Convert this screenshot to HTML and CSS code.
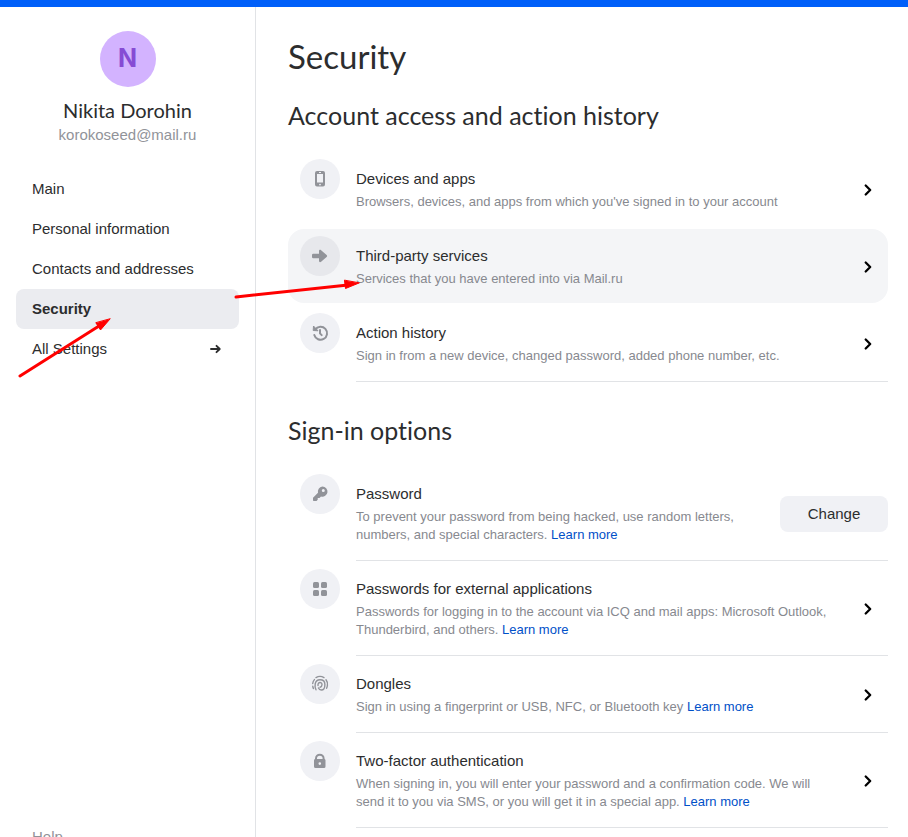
FILE: index.html
```html
<!DOCTYPE html>
<html lang="en">
<head>
    <meta charset="UTF-8">
    <meta name="viewport" content="width=device-width, initial-scale=1.0">
    <title>Security</title>
    <link rel="stylesheet" href="styles.css">
</head>
<body>

    <!-- Shared chevron shape -->
    <svg class="sprite" aria-hidden="true">
        <symbol id="chevron" viewBox="0 0 16 16">
            <path d="M5.700 3.500 10.200 8l-4.500 4.500" fill="none" stroke="currentColor" stroke-width="2.300" stroke-linecap="round" stroke-linejoin="round"/>
        </symbol>
    </svg>

    <div class="layout">
        <aside class="sidebar">
            <div class="profile">
                <div class="avatar">N</div>
                <div class="profile-name">Nikita Dorohin</div>
                <div class="profile-email">korokoseed@mail.ru</div>
            </div>
            <nav class="menu">
                <a href="#">Main</a>
                <a href="#">Personal information</a>
                <a href="#">Contacts and addresses</a>
                <a href="#" class="active">Security</a>
                <a href="#">All Settings
                    <svg width="16" height="16" viewBox="0 0 16 16" aria-hidden="true">
                        <path d="M4 9h8.500M9.500 5.800 12.700 9l-3.200 3.200" fill="none" stroke="currentColor" stroke-width="1.900" stroke-linecap="round" stroke-linejoin="round"/>
                    </svg>
                </a>
            </nav>
            <a href="#" class="help">Help</a>
        </aside>

        <main class="content">
            <h1>Security</h1>

            <section>
                <h2>Account access and action history</h2>
                <ul class="options">
                    <li class="no-line">
                        <a href="#" class="row">
                            <span class="icon">
                                <svg width="20" height="20" viewBox="0 0 20 20">
                                    <path fill-rule="evenodd" d="M7 2h6a2 2 0 0 1 2 2v11.500a2 2 0 0 1-2 2H7a2 2 0 0 1-2-2V4a2 2 0 0 1 2-2zm0 3v8.500h6V5zM9 3v1h2V3zm1 11.700a.9.900 0 1 0 0 1.800.9.900 0 0 0 0-1.800z"/>
                                </svg>
                            </span>
                            <span class="text">
                                <span class="title">Devices and apps</span>
                                <span class="desc">Browsers, devices, and apps from which you've signed in to your account</span>
                            </span>
                            <svg class="chevron"><use href="#chevron"/></svg>
                        </a>
                    </li>
                    <li class="no-line">
                        <a href="#" class="row hovered">
                            <span class="icon">
                                <svg width="20" height="20" viewBox="0 0 20 20">
                                    <path d="M3.300 7.700H9V5.200c0-1.400 1.100-1.800 2.100-1l5.500 4.700c.7.600.7 1.500 0 2.100l-5.500 4.800c-1 .8-2.100.4-2.100-1v-2.500H3.300A1.300 1.300 0 0 1 2 11V9a1.300 1.300 0 0 1 1.300-1.300z"/>
                                </svg>
                            </span>
                            <span class="text">
                                <span class="title">Third-party services</span>
                                <span class="desc">Services that you have entered into via Mail.ru</span>
                            </span>
                            <svg class="chevron"><use href="#chevron"/></svg>
                        </a>
                    </li>
                    <li>
                        <a href="#" class="row">
                            <span class="icon">
                                <svg width="20" height="20" viewBox="0 0 20 20">
                                    <path d="M5.200 6.600A6.500 6.500 0 1 1 4.300 12" fill="none" stroke="currentColor" stroke-width="2" stroke-linecap="round"/>
                                    <path d="M3.500 3 3.200 7.500l4.800.3z" stroke="currentColor" stroke-linejoin="round"/>
                                    <path d="M10 7v3.400l1.700 1.700" fill="none" stroke="currentColor" stroke-width="2" stroke-linecap="round"/>
                                </svg>
                            </span>
                            <span class="text">
                                <span class="title">Action history</span>
                                <span class="desc">Sign in from a new device, changed password, added phone number, etc.</span>
                            </span>
                            <svg class="chevron"><use href="#chevron"/></svg>
                        </a>
                    </li>
                </ul>
            </section>

            <section>
                <h2>Sign-in options</h2>
                <ul class="options">
                    <li>
                        <div class="row">
                            <span class="icon">
                                <svg width="20" height="20" viewBox="0 0 20 20">
                                    <path fill-rule="evenodd" d="M12.300 2.500a5.100 5.100 0 1 1-1.300 10L9.500 14H7.700v1.700L6.500 17H3.700a.7.700 0 0 1-.7-.7v-2.500l5-5a5.100 5.100 0 0 1 4.300-6.300zM13.300 5a1.500 1.500 0 1 0 0 3 1.500 1.500 0 0 0 0-3z"/>
                                </svg>
                            </span>
                            <div class="text">
                                <div class="title">Password</div>
                                <div class="desc">To prevent your password from being hacked, use random letters, numbers, and special characters. <a href="#">Learn more</a></div>
                            </div>
                            <button type="button" class="change">Change</button>
                        </div>
                    </li>
                    <li>
                        <div class="row">
                            <span class="icon">
                                <svg width="20" height="20" viewBox="0 0 20 20">
                                    <rect x="3" y="3" width="6" height="6" rx="1.500"/>
                                    <rect x="11" y="3" width="6" height="6" rx="1.500"/>
                                    <rect x="3" y="11" width="6" height="6" rx="1.500"/>
                                    <rect x="11" y="11" width="6" height="6" rx="1.500"/>
                                </svg>
                            </span>
                            <div class="text">
                                <div class="title">Passwords for external applications</div>
                                <div class="desc">Passwords for logging in to the account via ICQ and mail apps: Microsoft Outlook, Thunderbird, and others. <a href="#">Learn more</a></div>
                            </div>
                            <svg class="chevron"><use href="#chevron"/></svg>
                        </div>
                    </li>
                    <li>
                        <div class="row">
                            <span class="icon">
                                <svg width="20" height="20" viewBox="0 0 20 20" class="stroked">
                                    <path d="M6 3.600a7.800 7.800 0 0 1 8 0M2.700 9.500c.2-1.600.8-2.900 1.700-3.900M16 5.800c1.300 1.600 1.800 3.400 1.400 5.700-.1 1-.4 2-.8 2.800M2.800 12.300c.1.900.3 1.600.7 2.200"/>
                                    <path d="M6 15.800c-1-2-1.200-4-.8-6C5.600 7.300 7.500 5.700 10 5.700c3 0 4.900 2 4.900 4.700 0 3.400-1.600 5.600-3.600 5.600-1.300 0-2.300-.7-2.800-2"/>
                                    <path d="M8 11.500c-.2-1.800.6-3 2-3 1.300 0 2.100.9 2 2.200-.1 1.300-.8 2.300-1.900 2.600"/>
                                </svg>
                            </span>
                            <div class="text">
                                <div class="title">Dongles</div>
                                <div class="desc">Sign in using a fingerprint or USB, NFC, or Bluetooth key <a href="#">Learn more</a></div>
                            </div>
                            <svg class="chevron"><use href="#chevron"/></svg>
                        </div>
                    </li>
                    <li>
                        <div class="row">
                            <span class="icon">
                                <svg width="20" height="20" viewBox="0 0 20 20">
                                    <path fill-rule="evenodd" d="M5 8V7.500a4.800 4.800 0 0 1 9.600 0V8a1.500 1.500 0 0 1 .9 1.400v6.100A1.500 1.500 0 0 1 14 17H5.500A1.500 1.500 0 0 1 4 15.500V9.400A1.500 1.500 0 0 1 5 8zm2 0h5.600v-.5a2.800 2.800 0 0 0-5.600 0zM9.800 11.300a1.300 1.300 0 1 0 0 2.600 1.300 1.300 0 0 0 0-2.600z"/>
                                </svg>
                            </span>
                            <div class="text">
                                <div class="title">Two-factor authentication</div>
                                <div class="desc">When signing in, you will enter your password and a confirmation code. We will send it to you via SMS, or you will get it in a special app. <a href="#">Learn more</a></div>
                            </div>
                            <svg class="chevron"><use href="#chevron"/></svg>
                        </div>
                    </li>
                </ul>
            </section>
        </main>
    </div>

    <!-- Red pointers drawn over the page -->
    <svg class="pointers" width="400" height="400" viewBox="0 0 400 400" aria-hidden="true">
        <path d="M20 376 99 326M236 297l112-12"/>
        <path class="head" d="M110 319 100.500 330 96 323zM359 283l-13.500 5.500-1-8z"/>
    </svg>

</body>
</html>
```

FILE: styles.css
```css
* {
    box-sizing: border-box;
}

body {
    margin: 0;
    border-top: 7px solid #005ff9;
    height: 100vh;
    overflow: hidden;
    background-color: #ffffff;
    color: #2c2d2e;
    font-family: "Liberation Sans", Arial, sans-serif;
    font-size: 15px;
}

a {
    color: inherit;
    text-decoration: none;
}

.sprite {
    display: none;
}

.layout {
    display: flex;
    height: 100%;
}

/* --- SIDEBAR --- */

.sidebar {
    display: flex;
    flex-direction: column;
    flex: none;
    width: 256px;
    padding: 24px 16px 0;
    border-right: 1px solid #e1e3e6;
}

.profile {
    display: flex;
    flex-direction: column;
    align-items: center;
    margin-bottom: 20px;
}

.avatar {
    display: flex;
    justify-content: center;
    align-items: center;
    width: 56px;
    height: 56px;
    margin-bottom: 12px;
    padding-bottom: 2px;
    border-radius: 50%;
    background-color: #d3b3ff;
    color: #864bd4;
    font: bold 25px Inter, sans-serif;
}

.profile-name {
    font: 20px/22px Lato, sans-serif;
    font-variant-ligatures: none;
}

.profile-email {
    line-height: 28px;
    color: #919399;
}

.menu a {
    display: flex;
    justify-content: space-between;
    align-items: center;
    height: 40px;
    padding: 0 16px 2px;
    border-radius: 8px;
}

.menu a.active {
    background-color: #ebecf0;
    font-weight: bold;
}

.help {
    margin: auto 0 -10px;
    padding: 0 16px;
    line-height: 20px;
    color: #919399;
}

/* --- CONTENT --- */

.content {
    flex: 1;
    padding: 30px 20px 0 32px;
}

h1,
h2 {
    margin: 0;
    font-family: Lato, sans-serif;
    font-weight: normal;
    font-variant-ligatures: none;
}

h1 {
    margin-bottom: 24px;
    font-size: 33px;
    line-height: 38px;
}

h2 {
    margin-bottom: 20px;
    font-size: 25px;
    line-height: 32px;
}

.options {
    margin: 0 0 32px;
    padding: 0;
    list-style: none;
}

.options li {
    padding-top: 1px;
}

/* Line under the text, starts after the icon */
.options li::after {
    content: "";
    display: block;
    margin: 1px 0 0 68px;
    border-bottom: 1px solid #e1e3e6;
}

.options li.no-line::after {
    visibility: hidden;
}

.row {
    display: flex;
    align-items: center;
    gap: 16px;
    padding: 16px 12px 14px;
    border-radius: 16px;
}

.row.hovered {
    background-color: #f4f5f7;
}

.icon {
    display: flex;
    justify-content: center;
    align-items: center;
    align-self: flex-start;
    flex: none;
    width: 40px;
    height: 40px;
    margin-top: -9px;
    border-radius: 50%;
    background-color: #f0f1f5;
    color: #919399;
}

.hovered .icon {
    background-color: #e7e8ec;
}

.icon svg {
    fill: currentColor;
}

.icon svg.stroked {
    fill: none;
    stroke: currentColor;
    stroke-width: 1.400px;
    stroke-linecap: round;
}

.text {
    flex: 1;
    padding: 0 16px 1px 0;
}

.title {
    display: block;
    margin-bottom: 3px;
    line-height: 22px;
}

.desc {
    display: block;
    font-size: 13px;
    line-height: 18px;
    color: #87898f;
}

.desc a {
    color: #0050c8;
}

.chevron {
    flex: none;
    width: 16px;
    height: 16px;
    color: #000000;
}

.change {
    width: 108px;
    height: 36px;
    margin-right: -12px;
    padding: 0 0 2px;
    border: 0;
    border-radius: 8px;
    background-color: #f0f1f5;
    color: inherit;
    font: inherit;
}

/* --- POINTERS --- */

.pointers {
    position: absolute;
    top: 0;
    left: 0;
    fill: none;
    stroke: #ff0000;
    stroke-width: 3px;
    stroke-linecap: round;
    pointer-events: none;
}

.pointers .head {
    fill: #ff0000;
    stroke-width: 1px;
}
```
